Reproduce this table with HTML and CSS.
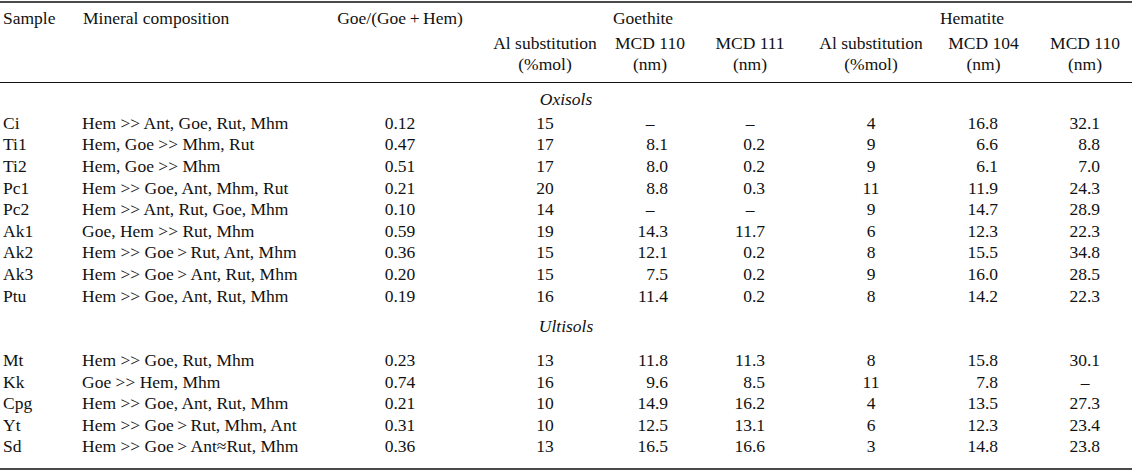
FILE: index.html
```html
<!DOCTYPE html>
<html lang="en">
<head>
<meta charset="utf-8">
<title>Table</title>
<link rel="stylesheet" href="styles.css">
</head>
<body>
<table class="tbl">
  <colgroup>
    <col class="w1"><col class="w2"><col class="w3"><col class="w4"><col class="w5"><col class="w6"><col class="w7"><col class="w8"><col class="w9">
  </colgroup>
  <thead>
    <tr class="h1">
      <th class="l rs" rowspan="3">Sample</th>
      <th class="l rs" rowspan="3">Mineral composition</th>
      <th class="c3 rs" rowspan="3">Goe/(Goe&#8201;+&#8201;Hem)</th>
      <th class="g1" colspan="3">Goethite</th>
      <th class="g2" colspan="3">Hematite</th>
    </tr>
    <tr class="h2">
      <th class="c4">Al substitution</th>
      <th class="c5">MCD 110</th>
      <th class="c6">MCD 111</th>
      <th class="c7">Al substitution</th>
      <th class="c8">MCD 104</th>
      <th class="c9">MCD 110</th>
    </tr>
    <tr class="h3">
      <th class="c4">(%mol)</th>
      <th class="c5">(nm)</th>
      <th class="c6">(nm)</th>
      <th class="c7">(%mol)</th>
      <th class="c8">(nm)</th>
      <th class="c9">(nm)</th>
    </tr>
  </thead>
  <tbody>
    <tr class="sub first"><td colspan="9">Oxisols</td></tr>
    <tr><td>Ci</td><td>Hem &gt;&gt; Ant, Goe, Rut, Mhm</td><td class="c3">0.12</td><td class="c4">15</td><td class="d5 dash">–</td><td class="d6 dash">–</td><td class="c7">4</td><td class="d8">16.8</td><td class="d9">32.1</td></tr>
    <tr><td>Ti1</td><td>Hem, Goe &gt;&gt; Mhm, Rut</td><td class="c3">0.47</td><td class="c4">17</td><td class="d5">8.1</td><td class="d6">0.2</td><td class="c7">9</td><td class="d8">6.6</td><td class="d9">8.8</td></tr>
    <tr><td>Ti2</td><td>Hem, Goe &gt;&gt; Mhm</td><td class="c3">0.51</td><td class="c4">17</td><td class="d5">8.0</td><td class="d6">0.2</td><td class="c7">9</td><td class="d8">6.1</td><td class="d9">7.0</td></tr>
    <tr><td>Pc1</td><td>Hem &gt;&gt; Goe, Ant, Mhm, Rut</td><td class="c3">0.21</td><td class="c4">20</td><td class="d5">8.8</td><td class="d6">0.3</td><td class="c7">11</td><td class="d8">11.9</td><td class="d9">24.3</td></tr>
    <tr><td>Pc2</td><td>Hem &gt;&gt; Ant, Rut, Goe, Mhm</td><td class="c3">0.10</td><td class="c4">14</td><td class="d5 dash">–</td><td class="d6 dash">–</td><td class="c7">9</td><td class="d8">14.7</td><td class="d9">28.9</td></tr>
    <tr><td>Ak1</td><td>Goe, Hem &gt;&gt; Rut, Mhm</td><td class="c3">0.59</td><td class="c4">19</td><td class="d5">14.3</td><td class="d6">11.7</td><td class="c7">6</td><td class="d8">12.3</td><td class="d9">22.3</td></tr>
    <tr><td>Ak2</td><td>Hem &gt;&gt; Goe&#8201;&gt;&#8201;Rut, Ant, Mhm</td><td class="c3">0.36</td><td class="c4">15</td><td class="d5">12.1</td><td class="d6">0.2</td><td class="c7">8</td><td class="d8">15.5</td><td class="d9">34.8</td></tr>
    <tr><td>Ak3</td><td>Hem &gt;&gt; Goe&#8201;&gt;&#8201;Ant, Rut, Mhm</td><td class="c3">0.20</td><td class="c4">15</td><td class="d5">7.5</td><td class="d6">0.2</td><td class="c7">9</td><td class="d8">16.0</td><td class="d9">28.5</td></tr>
    <tr><td>Ptu</td><td>Hem &gt;&gt; Goe, Ant, Rut, Mhm</td><td class="c3">0.19</td><td class="c4">16</td><td class="d5">11.4</td><td class="d6">0.2</td><td class="c7">8</td><td class="d8">14.2</td><td class="d9">22.3</td></tr>
    <tr class="sub second"><td colspan="9">Ultisols</td></tr>
    <tr><td>Mt</td><td>Hem &gt;&gt; Goe, Rut, Mhm</td><td class="c3">0.23</td><td class="c4">13</td><td class="d5">11.8</td><td class="d6">11.3</td><td class="c7">8</td><td class="d8">15.8</td><td class="d9">30.1</td></tr>
    <tr><td>Kk</td><td>Goe &gt;&gt; Hem, Mhm</td><td class="c3">0.74</td><td class="c4">16</td><td class="d5">9.6</td><td class="d6">8.5</td><td class="c7">11</td><td class="d8">7.8</td><td class="d9 dash">–</td></tr>
    <tr><td>Cpg</td><td>Hem &gt;&gt; Goe, Ant, Rut, Mhm</td><td class="c3">0.21</td><td class="c4">10</td><td class="d5">14.9</td><td class="d6">16.2</td><td class="c7">4</td><td class="d8">13.5</td><td class="d9">27.3</td></tr>
    <tr><td>Yt</td><td>Hem &gt;&gt; Goe&#8201;&gt;&#8201;Rut, Mhm, Ant</td><td class="c3">0.31</td><td class="c4">10</td><td class="d5">12.5</td><td class="d6">13.1</td><td class="c7">6</td><td class="d8">12.3</td><td class="d9">23.4</td></tr>
    <tr class="last"><td>Sd</td><td>Hem &gt;&gt; Goe&#8201;&gt;&#8201;Ant≈Rut, Mhm</td><td class="c3">0.36</td><td class="c4">13</td><td class="d5">16.5</td><td class="d6">16.6</td><td class="c7">3</td><td class="d8">14.8</td><td class="d9">23.8</td></tr>
  </tbody>
</table>
</body>
</html>
```

FILE: styles.css
```css
html, body {
  margin: 0;
  padding: 0;
  background: #fff;
}

body {
  font-family: "Liberation Serif", "Times New Roman", serif;
  font-size: 17.5px;
  color: #111;
}

.tbl {
  width: 1132px;
  margin-top: 1px;
  border-collapse: collapse;
  table-layout: fixed;
  border-top: 2px solid #4a4a4a;
  border-bottom: 2px solid #4a4a4a;
}

.w1 { width: 80px; }
.w2 { width: 253px; }
.w3 { width: 139px; }
.w4 { width: 138px; }
.w5 { width: 85px; }
.w6 { width: 110px; }
.w7 { width: 132px; }
.w8 { width: 93px; }
.w9 { width: 102px; }

th, td {
  padding: 0;
  font-weight: normal;
  line-height: 21.6px;
  height: 21.6px;
  white-space: nowrap;
  text-align: left;
  vertical-align: top;
}

th.l, td:first-child, td:nth-child(2) {
  padding-left: 3px;
}

td:nth-child(2) {
  padding-left: 2px;
}

.h1 th { padding-top: 5px; padding-bottom: 3px; }
.h3 th { padding-bottom: 6px; }
.h3 th, th.rs { border-bottom: 1px solid #111; }

.g1 { text-align: center; padding-left: 9px; }
.g2 { text-align: center; padding-left: 7px; }

th.c3, td.c3 { text-align: center; padding-right: 5px; }
th.c4, td.c4 { text-align: center; padding-left: 8px; }
th.c5 { text-align: center; padding-right: 5px; }
th.c6 { text-align: center; }
th.c7, td.c7 { text-align: center; }
th.c8 { text-align: center; }
th.c9 { text-align: center; padding-left: 8px; }

td.d5 { text-align: right; padding-right: 27px; }
td.d6 { text-align: right; padding-right: 40px; }
td.d8 { text-align: right; padding-right: 32px; }
td.d9 { text-align: right; padding-right: 32px; }

td.dash { text-align: center; padding-right: 0; }
td.d5.dash { padding-right: 5px; }
td.d9.dash { padding-left: 8px; }

.sub td {
  text-align: center;
  font-style: italic;
  padding-left: 0;
}
.sub.first td { padding-top: 6px; padding-bottom: 2.4px; }
.sub.second td { padding-top: 9px; padding-bottom: 12.4px; }

.last td { padding-bottom: 10px; }
```
